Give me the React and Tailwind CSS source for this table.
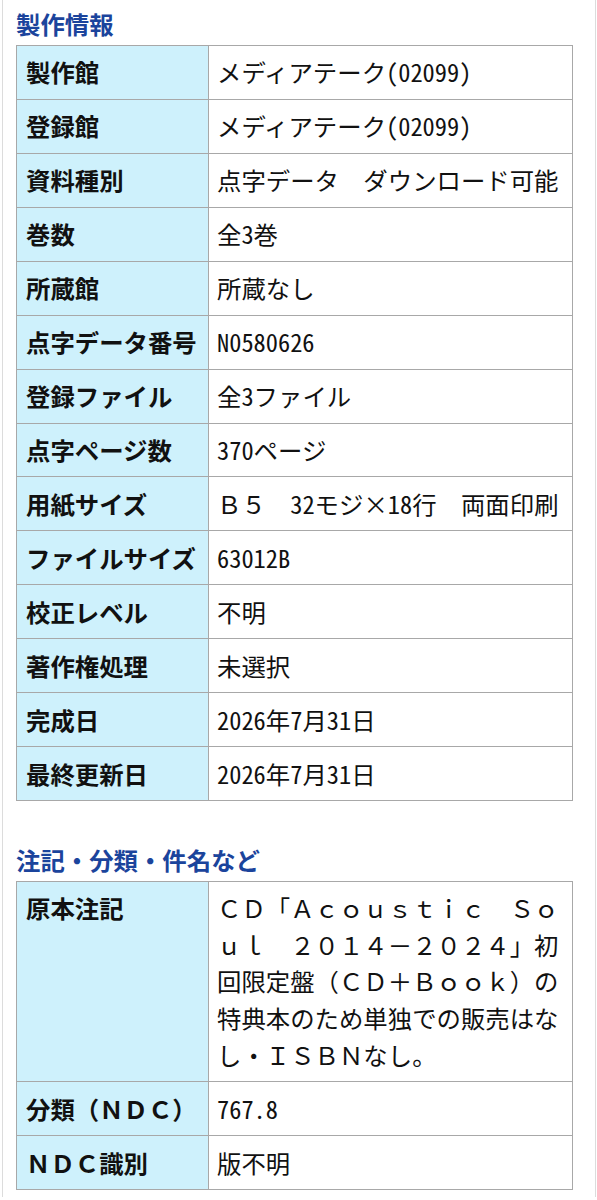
import React from "react";

const rows1 = [
  ["製作館", "メディアテーク(02099)"],
  ["登録館", "メディアテーク(02099)"],
  ["資料種別", "点字データ　ダウンロード可能"],
  ["巻数", "全3巻"],
  ["所蔵館", "所蔵なし"],
  ["点字データ番号", "N0580626"],
  ["登録ファイル", "全3ファイル"],
  ["点字ページ数", "370ページ"],
  ["用紙サイズ", "Ｂ５　32モジ×18行　両面印刷"],
  ["ファイルサイズ", "63012B"],
  ["校正レベル", "不明"],
  ["著作権処理", "未選択"],
  ["完成日", "2026年7月31日"],
  ["最終更新日", "2026年7月31日"],
];

const rows2 = [
  [
    "原本注記",
    "ＣＤ「Ａｃｏｕｓｔｉｃ　Ｓｏｕｌ　２０１４－２０２４」初回限定盤（ＣＤ＋Ｂｏｏｋ）の特典本のため単独での販売はなし・ＩＳＢＮなし。",
  ],
  ["分類（ＮＤＣ）", "767.8"],
  ["ＮＤＣ識別", "版不明"],
];

function Value({ text }) {
  const parts = text.split(/([\x20-\x7e×]+)/);
  return (
    <>
      {parts.map((p, i) =>
        /^[\x20-\x7e×]+$/.test(p) ? (
          <span key={i} className="[font-feature-settings:'hwid']">
            {p}
          </span>
        ) : (
          <React.Fragment key={i}>{p}</React.Fragment>
        )
      )}
    </>
  );
}

function InfoTable({ rows }) {
  return (
    <table className="w-[557px] border-collapse table-fixed">
      <colgroup>
        <col className="w-[192px]" />
        <col />
      </colgroup>
      <tbody>
        {rows.map(([k, v]) => (
          <tr key={k}>
            <th className="border border-[#a8a8a8] bg-[#cef1fc] align-top text-left pl-[9px] pr-1 py-[8.2px] font-bold text-[#111]">
              {k}
            </th>
            <td className="border border-[#a8a8a8] bg-white align-top text-left pl-[8px] pr-[8px] py-[8.2px] text-[#111] font-normal break-all">
              <Value text={v} />
            </td>
          </tr>
        ))}
      </tbody>
    </table>
  );
}

export default function App() {
  return (
    <div className="w-[597px] bg-white [font-family:'Noto_Sans_CJK_JP','Noto_Sans',sans-serif] text-[24.4px] leading-[1.5]">
      <div className="ml-[2px] w-[594px] border-x border-[#dcdcdc] pl-[13px] pt-[6px] pb-[7px]">
        <h2 className="font-bold text-[#1b449c] mb-[2px]">製作情報</h2>
        <InfoTable rows={rows1} />
        <h2 className="font-bold text-[#1b449c] mt-[41px] mb-[2px]">注記・分類・件名など</h2>
        <InfoTable rows={rows2} />
      </div>
    </div>
  );
}
